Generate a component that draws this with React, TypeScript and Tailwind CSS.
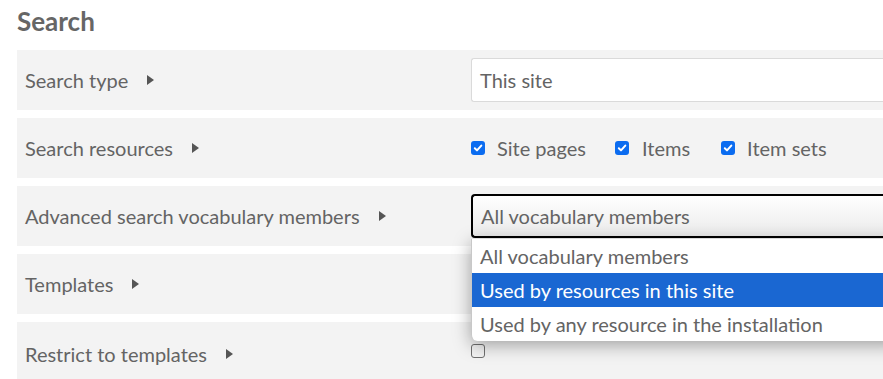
import React from "react"

function Arrow() {
    return (
        <svg width="7" height="10" viewBox="0 0 7 10" className="ml-[19px] shrink-0">
            <path d="M0 0 L7 5 L0 10 Z" fill="#555" />
        </svg>
    )
}

function Check({ checked }: { checked: boolean }) {
    if (!checked) {
        return <span className="block w-[14px] h-[14px] rounded-[3px] border border-[#707070]" />
    }
    return (
        <span className="flex items-center justify-center w-[14px] h-[14px] rounded-[3px] bg-[#0b6cf0]">
            <svg width="10" height="10" viewBox="0 0 10 10">
                <path d="M1.8 5.2 L4 7.4 L8.3 2.6" stroke="white" strokeWidth="2" fill="none" strokeLinecap="round" strokeLinejoin="round" />
            </svg>
        </span>
    )
}

function Row({ label, children, tall }: { label: string; children?: React.ReactNode; tall?: boolean }) {
    return (
        <div className={`flex bg-[#f3f3f3] ${tall ? "h-[70px]" : "h-[60px]"}`}>
            <div className={`w-[454px] shrink-0 flex items-center pl-2 ${tall ? "h-[64px]" : "h-[60px]"}`}>
                <span>{label}</span>
                <Arrow />
            </div>
            <div className="flex-1 flex items-center h-[60px]">{children}</div>
        </div>
    )
}

export default function App() {
    return (
        <div
            className="relative w-[883px] h-[379px] overflow-hidden bg-white text-[20px] text-[#646464]"
            style={{ fontFamily: "Lato, 'Noto Sans', sans-serif" }}
        >
            <div className="pl-[17px] pt-[5px]">
                <h2 className="text-[26px] font-bold text-[#666666] leading-[32px] mb-[13px]">Search</h2>
                <div className="flex flex-col gap-2">
                    <Row label="Search type">
                        <div className="w-full h-[44px] flex items-center px-[8px] bg-white border border-[#dadada] rounded-l-[3px] border-r-0">
                            This site
                        </div>
                    </Row>
                    <Row label="Search resources">
                        <div className="flex items-center">
                            <Check checked />
                            <span className="ml-[12px]">Site pages</span>
                            <span className="ml-[29px]"><Check checked /></span>
                            <span className="ml-[13px]">Items</span>
                            <span className="ml-[31px]"><Check checked /></span>
                            <span className="ml-[12px]">Item sets</span>
                        </div>
                    </Row>
                    <Row label="Advanced search vocabulary members">
                        <div className="w-full h-[44px] flex items-center px-[8px] border-2 border-r-0 border-black rounded-l-[4px] bg-gradient-to-b from-white to-[#ebebeb]">
                            All vocabulary members
                        </div>
                    </Row>
                    <Row label="Templates" />
                    <Row label="Restrict to templates" tall>
                        <div className="self-start pt-[22px]">
                            <Check checked={false} />
                        </div>
                    </Row>
                </div>
            </div>

            {/* open select list */}
            <div className="absolute left-[471px] top-[239px] w-[430px] bg-white rounded-bl-[6px] shadow-[0_4px_18px_rgba(0,0,0,0.35)] border-l border-[#c8c8c8]">
                <div className="h-[34px] flex items-center pl-[8px]">All vocabulary members</div>
                <div className="h-[34px] flex items-center pl-[8px] bg-[#1a67d2] text-white">Used by resources in this site</div>
                <div className="h-[34px] flex items-center pl-[8px]">Used by any resource in the installation</div>
            </div>
        </div>
    )
}
